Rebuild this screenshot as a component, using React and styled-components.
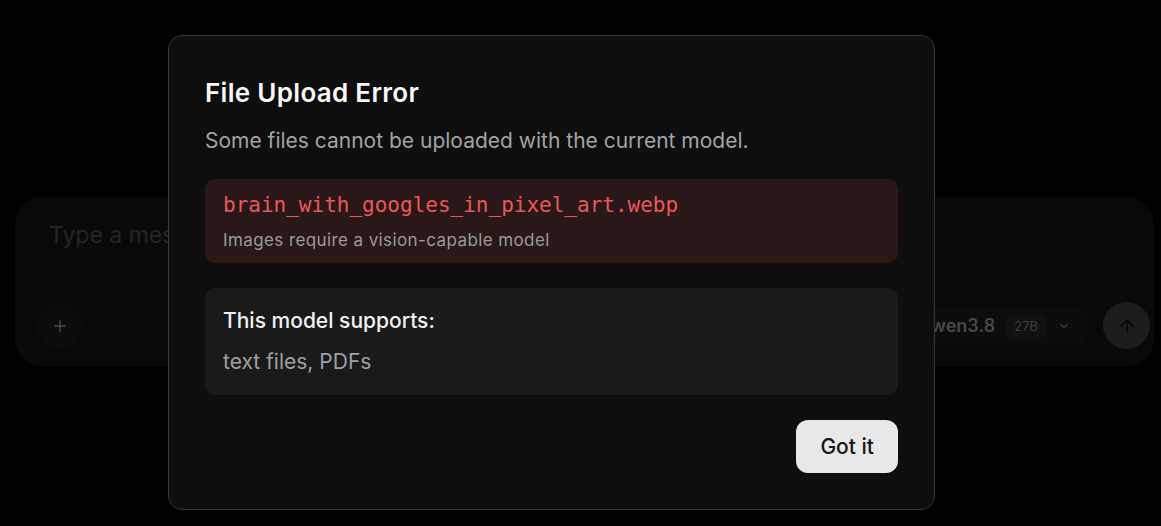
import React from 'react'
import styled, { createGlobalStyle } from 'styled-components'

const GlobalStyle = createGlobalStyle`
    body{
        margin:0;
        background:#000;
        font-family:Inter, "Noto Sans", sans-serif;
    }
`

const Page = styled.div`
    width:1161px;
    height:526px;
    padding:197px 0 0 15px;
    box-sizing:border-box;
    overflow:hidden;
`

const ChatBox = styled.div`
    width:1139px;
    height:170px;
    box-sizing:border-box;
    border-radius:28px;
    background:#0b0b0b;
    padding:22px 4px 18px 22px;
    display:flex;
    flex-direction:column;
    justify-content:space-between;
`

const Placeholder = styled.div`
    padding-left:12px;
    font-size:23px;
    line-height:32px;
    color:#2b2b2b;
`

const Toolbar = styled.div`
    display:flex;
    align-items:center;
    justify-content:space-between;
    height:47px;
`

const RoundButton = styled.button`
    width:${p => p.$size}px;
    height:${p => p.$size}px;
    border-radius:50%;
    border:none;
    padding:0;
    display:flex;
    align-items:center;
    justify-content:center;
    background:${p => p.$bg};
    color:${p => p.$fg};
`

const RightTools = styled.div`
    display:flex;
    align-items:center;
    gap:16px;
`

const ModelSelect = styled.div`
    display:flex;
    align-items:center;
    height:36px;
    padding:0 17px 0 12px;
    border-radius:8px;
    background:#0f0f0f;
`

const ModelName = styled.span`
    font-size:18px;
    font-weight:600;
    color:#555;
    margin-right:11px;
`

const SizeBadge = styled.span`
    font-size:13px;
    color:#474747;
    background:#151515;
    border-radius:4px;
    padding:3px 8px;
    margin-right:12px;
`

const Overlay = styled.div`
    position:fixed;
    inset:0;
    background:rgba(0,0,0,0.15);
    padding:35px 0 0 168px;
    box-sizing:border-box;
    display:flex;
    align-items:flex-start;
`

const Modal = styled.div`
    width:767px;
    box-sizing:border-box;
    background:#0e0e0e;
    border:1px solid #363636;
    border-radius:14px;
    padding:41px 36px 36px 36px;
    display:flex;
    flex-direction:column;
`

const Title = styled.h2`
    margin:0;
    font-size:26px;
    line-height:32px;
    font-weight:600;
    letter-spacing:0.3px;
    color:#f7f7f7;
`

const Subtitle = styled.p`
    margin:18px 0 24px;
    font-size:21px;
    line-height:28px;
    color:#a3a3a3;
`

const Card = styled.div`
    border-radius:10px;
    background:${p => p.$tone === 'error' ? '#2a1718' : '#1a1a1a'};
    padding:${p => p.$tone === 'error' ? '12px 18px 11px' : '19px 18px 19px'};
    display:flex;
    flex-direction:column;
    gap:${p => p.$tone === 'error' ? '9px' : '13px'};
    & + &{
        margin-top:25px;
    }
`

const FileName = styled.div`
    font-family:"DejaVu Sans Mono", monospace;
    font-size:21px;
    line-height:28px;
    color:#e8585a;
`

const Hint = styled.div`
    font-size:17px;
    line-height:24px;
    letter-spacing:0.4px;
    color:#9b9b9b;
`

const CardHeading = styled.div`
    font-size:21px;
    line-height:28px;
    font-weight:500;
    color:#f2f2f2;
`

const CardText = styled.div`
    font-size:21px;
    line-height:28px;
    color:#a0a0a0;
`

const Footer = styled.div`
    display:flex;
    justify-content:flex-end;
    margin-top:25px;
`

const GotIt = styled.button`
    height:53px;
    padding:0 24px;
    border:none;
    border-radius:12px;
    background:#e8e8e8;
    color:#161616;
    font-family:inherit;
    font-size:21px;
    font-weight:500;
    cursor:pointer;
`

const PlusIcon = () => (
    <svg width="18" height="18" viewBox="0 0 24 24" fill="none" stroke="currentColor" strokeWidth="2" strokeLinecap="round">
        <path d="M12 5v14M5 12h14" />
    </svg>
)

const ArrowUp = () => (
    <svg width="20" height="20" viewBox="0 0 24 24" fill="none" stroke="currentColor" strokeWidth="2.2" strokeLinecap="round" strokeLinejoin="round">
        <path d="M12 19V5M5 12l7-7 7 7" />
    </svg>
)

const Chevron = () => (
    <svg width="12" height="12" viewBox="0 0 24 24" fill="none" stroke="#4a4a4a" strokeWidth="2.5" strokeLinecap="round" strokeLinejoin="round">
        <path d="M6 9l6 6 6-6" />
    </svg>
)

const App = () => {
    return (
        <>
            <GlobalStyle />
            <Page>
                <ChatBox>
                    <Placeholder>Type a message...</Placeholder>
                    <Toolbar>
                        <RoundButton $size={45} $bg="#0f0f0f" $fg="#555"><PlusIcon /></RoundButton>
                        <RightTools>
                            <ModelSelect>
                                <ModelName>Qwen3.8</ModelName>
                                <SizeBadge>27B</SizeBadge>
                                <Chevron />
                            </ModelSelect>
                            <RoundButton $size={47} $bg="#232323" $fg="#0a0a0a"><ArrowUp /></RoundButton>
                        </RightTools>
                    </Toolbar>
                </ChatBox>
            </Page>
            <Overlay>
                <Modal>
                    <Title>File Upload Error</Title>
                    <Subtitle>Some files cannot be uploaded with the current model.</Subtitle>
                    <Card $tone="error">
                        <FileName>brain_with_googles_in_pixel_art.webp</FileName>
                        <Hint>Images require a vision-capable model</Hint>
                    </Card>
                    <Card>
                        <CardHeading>This model supports:</CardHeading>
                        <CardText>text files, PDFs</CardText>
                    </Card>
                    <Footer>
                        <GotIt>Got it</GotIt>
                    </Footer>
                </Modal>
            </Overlay>
        </>
    )
}

export default App
